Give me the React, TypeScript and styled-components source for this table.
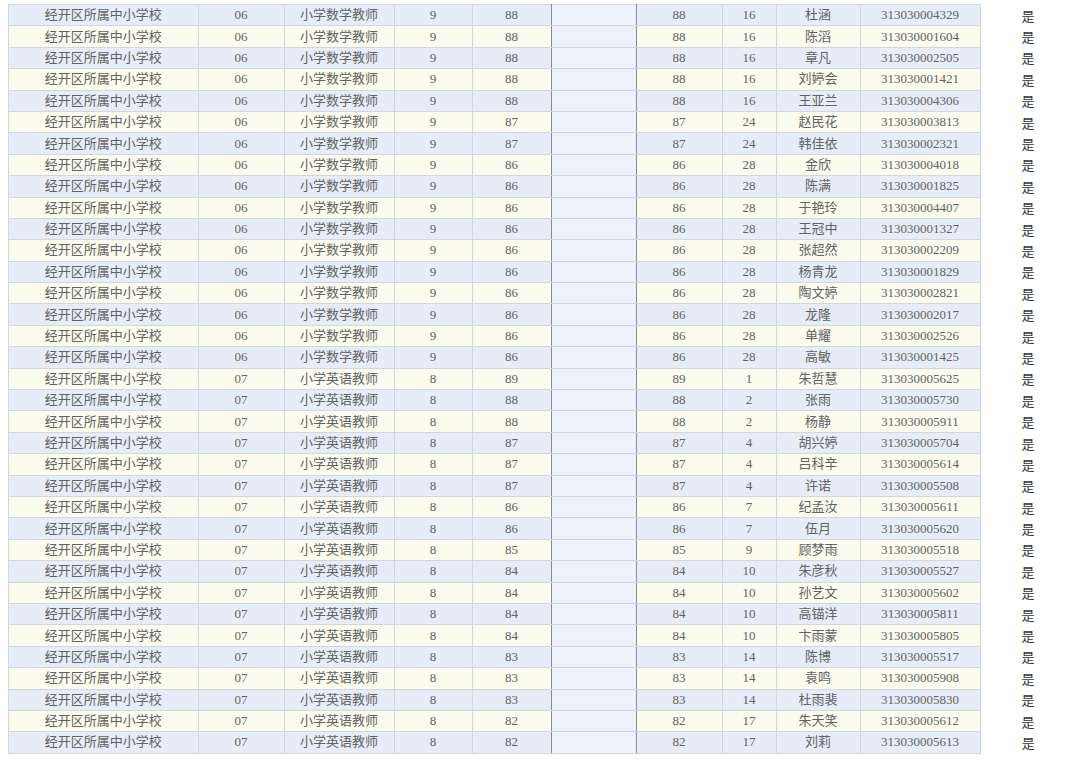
import React from "react";
import styled, { createGlobalStyle } from "styled-components";

const GlobalStyle = createGlobalStyle`
  html, body {
    margin: 0;
    padding: 0;
    background: #ffffff;
  }
  body {
    font-family: "Liberation Serif", "Noto Sans CJK SC", serif;
  }
`;

type Row = [string, string, string, string, string, string, string, string];

// code, subject, quota, score, final, rank, name, ticket
const rows: Row[] = [
  ["06", "小学数学教师", "9", "88", "88", "16", "杜涵", "313030004329"],
  ["06", "小学数学教师", "9", "88", "88", "16", "陈滔", "313030001604"],
  ["06", "小学数学教师", "9", "88", "88", "16", "章凡", "313030002505"],
  ["06", "小学数学教师", "9", "88", "88", "16", "刘婷会", "313030001421"],
  ["06", "小学数学教师", "9", "88", "88", "16", "王亚兰", "313030004306"],
  ["06", "小学数学教师", "9", "87", "87", "24", "赵民花", "313030003813"],
  ["06", "小学数学教师", "9", "87", "87", "24", "韩佳依", "313030002321"],
  ["06", "小学数学教师", "9", "86", "86", "28", "金欣", "313030004018"],
  ["06", "小学数学教师", "9", "86", "86", "28", "陈满", "313030001825"],
  ["06", "小学数学教师", "9", "86", "86", "28", "于艳玲", "313030004407"],
  ["06", "小学数学教师", "9", "86", "86", "28", "王冠中", "313030001327"],
  ["06", "小学数学教师", "9", "86", "86", "28", "张超然", "313030002209"],
  ["06", "小学数学教师", "9", "86", "86", "28", "杨青龙", "313030001829"],
  ["06", "小学数学教师", "9", "86", "86", "28", "陶文婷", "313030002821"],
  ["06", "小学数学教师", "9", "86", "86", "28", "龙隆", "313030002017"],
  ["06", "小学数学教师", "9", "86", "86", "28", "单耀", "313030002526"],
  ["06", "小学数学教师", "9", "86", "86", "28", "高敏", "313030001425"],
  ["07", "小学英语教师", "8", "89", "89", "1", "朱哲慧", "313030005625"],
  ["07", "小学英语教师", "8", "88", "88", "2", "张雨", "313030005730"],
  ["07", "小学英语教师", "8", "88", "88", "2", "杨静", "313030005911"],
  ["07", "小学英语教师", "8", "87", "87", "4", "胡兴婷", "313030005704"],
  ["07", "小学英语教师", "8", "87", "87", "4", "吕科辛", "313030005614"],
  ["07", "小学英语教师", "8", "87", "87", "4", "许诺", "313030005508"],
  ["07", "小学英语教师", "8", "86", "86", "7", "纪孟汝", "313030005611"],
  ["07", "小学英语教师", "8", "86", "86", "7", "伍月", "313030005620"],
  ["07", "小学英语教师", "8", "85", "85", "9", "顾梦雨", "313030005518"],
  ["07", "小学英语教师", "8", "84", "84", "10", "朱彦秋", "313030005527"],
  ["07", "小学英语教师", "8", "84", "84", "10", "孙艺文", "313030005602"],
  ["07", "小学英语教师", "8", "84", "84", "10", "高锚洋", "313030005811"],
  ["07", "小学英语教师", "8", "84", "84", "10", "卞雨蒙", "313030005805"],
  ["07", "小学英语教师", "8", "83", "83", "14", "陈博", "313030005517"],
  ["07", "小学英语教师", "8", "83", "83", "14", "袁鸣", "313030005908"],
  ["07", "小学英语教师", "8", "83", "83", "14", "杜雨裴", "313030005830"],
  ["07", "小学英语教师", "8", "82", "82", "17", "朱天笑", "313030005612"],
  ["07", "小学英语教师", "8", "82", "82", "17", "刘莉", "313030005613"],
];

const colWidths = [189.5, 86, 110, 78, 79, 85, 86, 54, 84, 120, 96];

const Page = styled.div`
  padding: 4px 0 0 8px;
`;

const Table = styled.table`
  border-collapse: collapse;
  table-layout: fixed;
  width: 1067.5px;
  font-size: 13px;
  color: #626262;
`;

const TableRow = styled.tr<{ $even: boolean }>`
  height: 21.4px;
  background: ${(p) => (p.$even ? "#fbfcee" : "#e7edf8")};
`;

const Cell = styled.td<{ $divider?: "left" | "right" }>`
  border: 1px solid #d2d7df;
  ${(p) => (p.$divider ? `border-${p.$divider}-color: #858c98;` : "")}
  padding: 0;
  text-align: center;
  vertical-align: middle;
  line-height: 20px;
  white-space: nowrap;
  overflow: hidden;
`;

const BlankCell = styled.td`
  background: #edf1f9;
  border: 1px solid #d2d7df;
  border-left-color: #858c98;
  border-right-color: #858c98;
  padding: 0;
`;

const FlagCell = styled.td`
  border: none;
  background: #ffffff;
  padding: 0;
  text-align: center;
  color: #333333;
  font-size: 13px;
`;

export default function App() {
  return (
    <>
      <GlobalStyle />
      <Page>
        <Table>
          <colgroup>
            {colWidths.map((w, i) => (
              <col key={i} style={{ width: `${w}px` }} />
            ))}
          </colgroup>
          <tbody>
            {rows.map((r, i) => (
              <TableRow key={i} $even={i % 2 === 1}>
                <Cell>经开区所属中小学校</Cell>
                <Cell>{r[0]}</Cell>
                <Cell>{r[1]}</Cell>
                <Cell>{r[2]}</Cell>
                <Cell $divider="right">{r[3]}</Cell>
                <BlankCell />
                <Cell $divider="left">{r[4]}</Cell>
                <Cell>{r[5]}</Cell>
                <Cell>{r[6]}</Cell>
                <Cell>{r[7]}</Cell>
                <FlagCell>是</FlagCell>
              </TableRow>
            ))}
          </tbody>
        </Table>
      </Page>
    </>
  );
}
